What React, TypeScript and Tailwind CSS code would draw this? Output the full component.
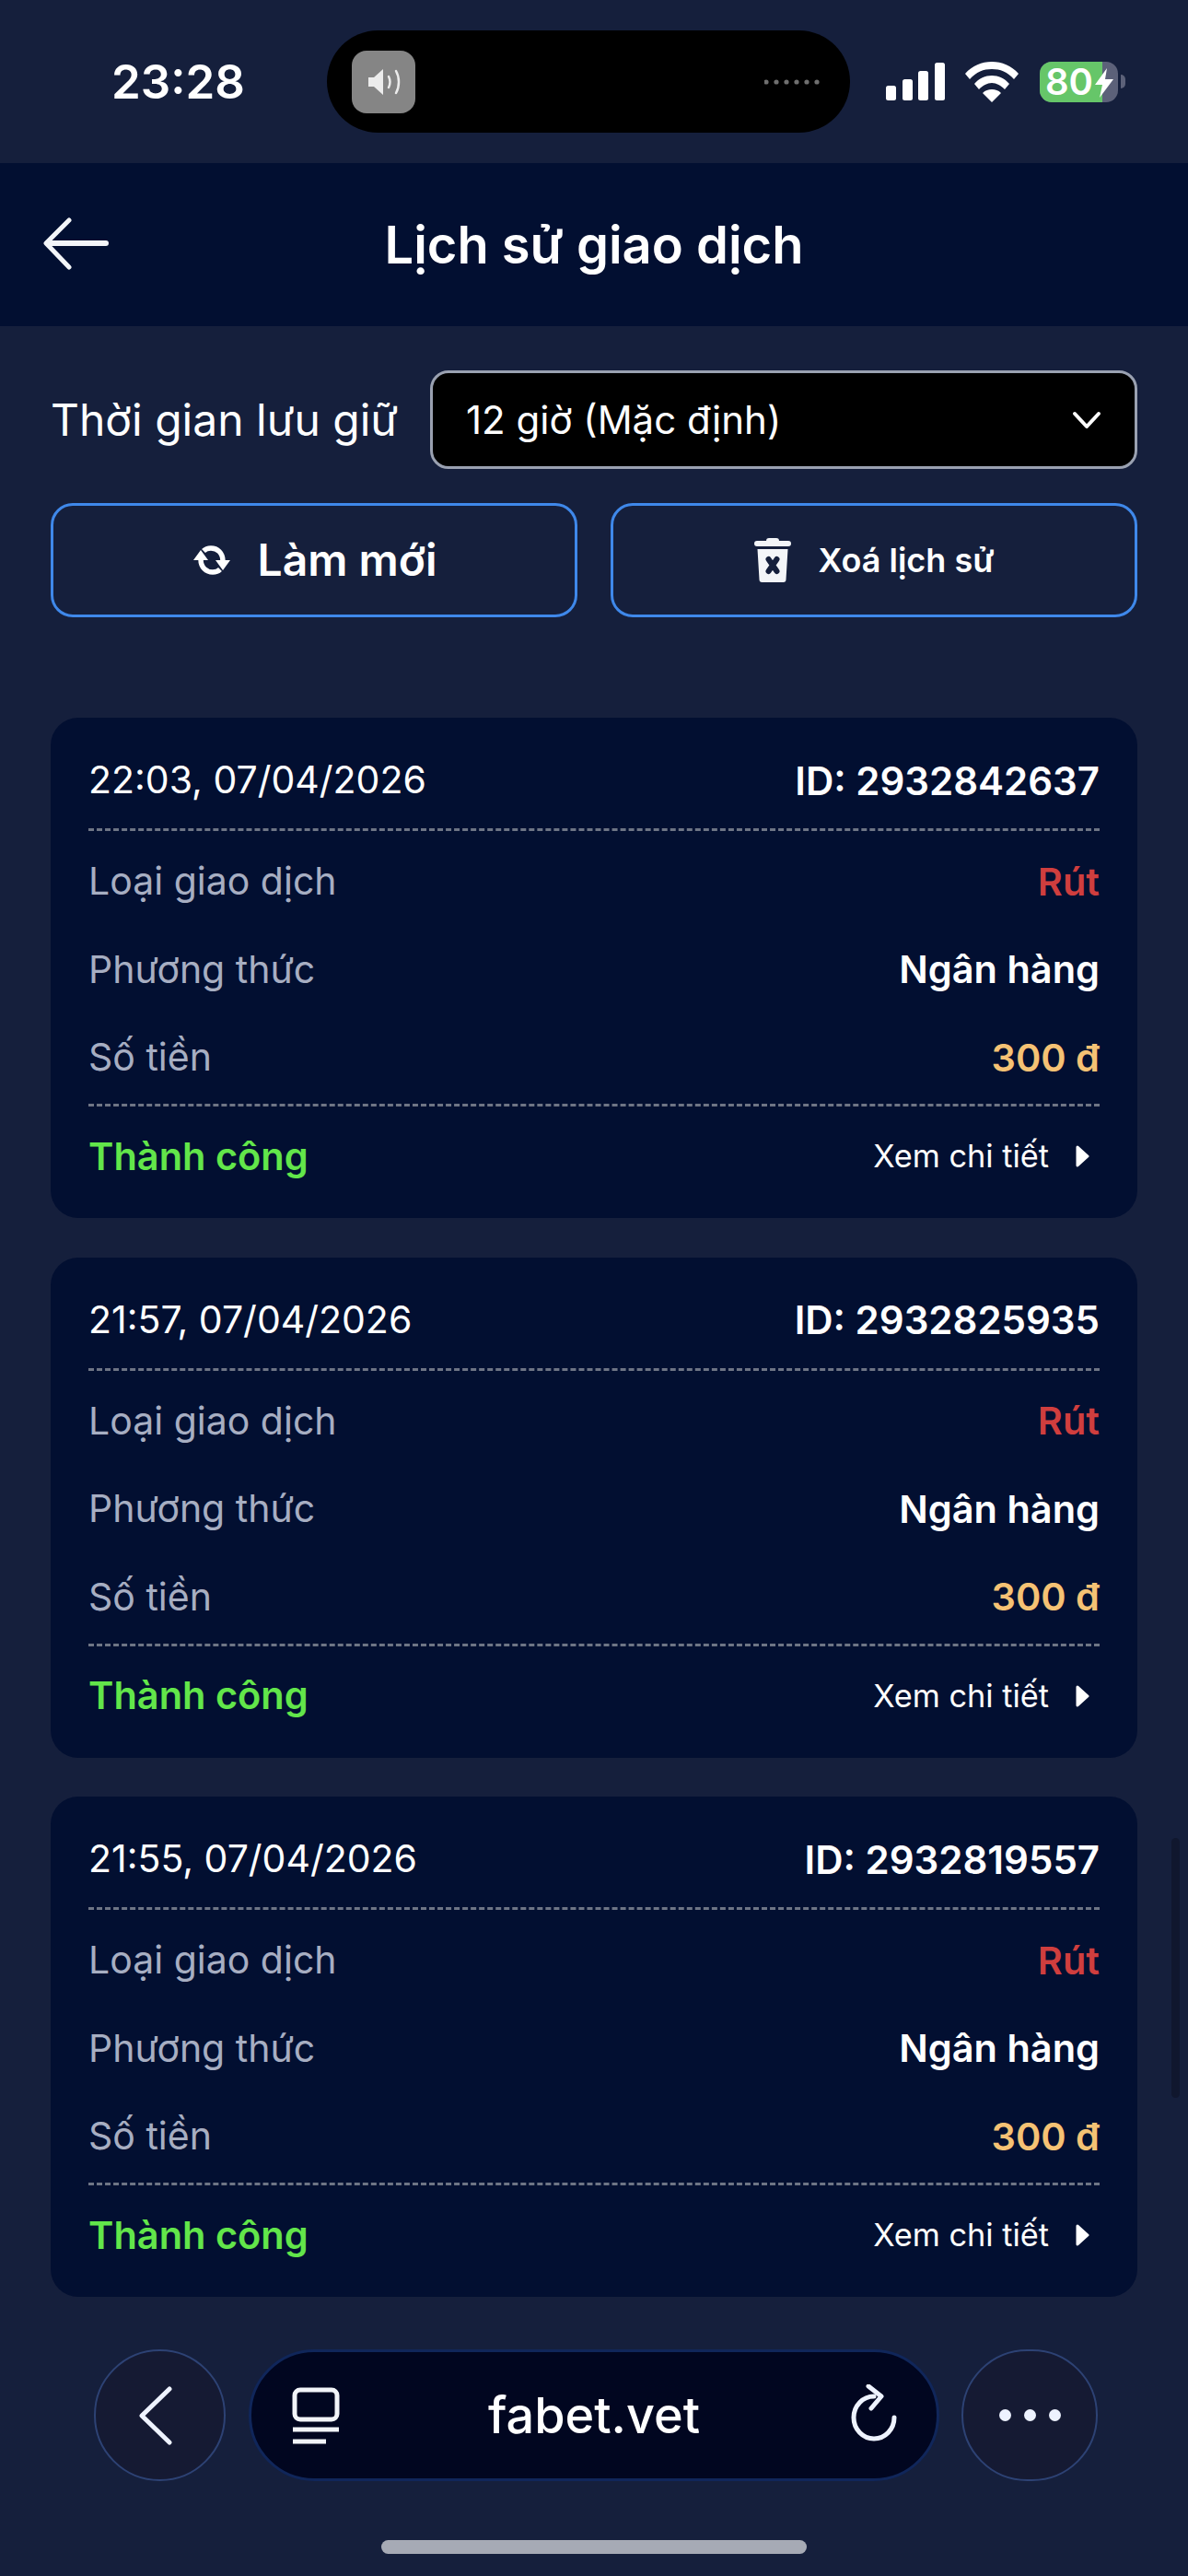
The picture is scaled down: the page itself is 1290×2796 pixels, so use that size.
const font = { fontFamily: 'Inter, "Noto Sans", sans-serif' };

const transactions = [
  { time: '22:03, 07/04/2026', id: '2932842637' },
  { time: '21:57, 07/04/2026', id: '2932825935' },
  { time: '21:55, 07/04/2026', id: '2932819557' },
];

const StatusBar = () => (
  <div className="relative flex h-[177px] shrink-0 items-center">
    <span className="ml-[121px] w-[234px] text-[51px] leading-none font-semibold text-white">23:28</span>
    <div className="flex h-[111px] w-[568px] items-center justify-between rounded-full bg-black pr-[33px] pl-[27px]">
      <div className="flex h-[68px] w-[69px] items-center justify-center rounded-[16px] bg-[#858585]">
        <svg width="36" height="30" viewBox="0 0 36 30">
          <path d="M1 10h6l10-9v28L7 20H1z" fill="#ececec" />
          <path d="M23 9c2 4 2 8 0 12M31 3c4 7 4 17 0 24" fill="none" stroke="#ececec" strokeWidth="2.5" strokeLinecap="round" />
        </svg>
      </div>
      <svg width="60" height="6" viewBox="0 0 60 6">
        {[3, 14, 25, 36, 47, 58].map((x) => (
          <circle key={x} cx={x - 1} cy="3" r="2.6" fill="#6f6f6f" />
        ))}
      </svg>
    </div>
    <div className="ml-[38px] flex items-center">
      <svg width="66" height="42" viewBox="0 0 66 42" fill="#fff">
        <rect x="1" y="25" width="11" height="16" rx="2.5" />
        <rect x="19" y="18" width="11" height="23" rx="2.5" />
        <rect x="36" y="9" width="11" height="32" rx="2.5" />
        <rect x="54" y="0" width="11" height="41" rx="2.5" />
      </svg>
      <svg className="ml-[21px]" width="58" height="44" viewBox="0 0 58 44" fill="#fff">
        <path d="M29 0C18 0 8 4 0 13l5 6C12 11 20 8 29 8s17 3 24 11l5-6C50 4 40 0 29 0z" />
        <path d="M29 15c-7 0-14 3-19 9l5 6c4-4 9-7 14-7s10 3 14 7l5-6c-5-6-12-9-19-9z" />
        <path d="M29 30c-4 0-7 1-10 4l10 10 10-10c-3-3-6-4-10-4z" />
      </svg>
      <div className="relative ml-[23px] flex h-[44px] w-[85px] rounded-[13px] bg-[#5c6179]">
        <div className="flex w-[68px] items-center rounded-l-[13px] bg-[#66c669] pl-[6px] text-[40px] leading-none font-semibold text-white">80</div>
        <svg className="absolute top-[7px] left-[60px]" width="20" height="32" viewBox="0 0 20 32">
          <path d="M13 0L0 18h8L5 32l15-20h-9z" fill="#fff" />
        </svg>
      </div>
      <div className="ml-[3px] h-[15px] w-[5px] rounded-r-full bg-[#5c6179]" />
    </div>
  </div>
);

const Header = () => (
  <div className="relative flex h-[177px] shrink-0 items-center justify-center bg-[#020f31]">
    <svg className="absolute top-[59px] left-[46px]" width="72" height="58" viewBox="0 0 72 58" fill="none" stroke="#f3f5f8" strokeLinecap="round" strokeLinejoin="round">
      <path d="M29 3L4 28l25 26" strokeWidth="5" />
      <path d="M6 28h63" strokeWidth="6" />
    </svg>
    <h1 className="text-[56px] leading-none font-semibold text-white">Lịch sử giao dịch</h1>
  </div>
);

const Row = ({ label, value, color }: { label: string; value: string; color: string }) => (
  <div className="flex h-[95.5px] items-center justify-between">
    <span className="text-[41px] text-[#a7aec2]">{label}</span>
    <span className={`text-[41.5px] font-semibold ${color}`}>{value}</span>
  </div>
);

const Card = ({ time, id }: { time: string; id: string }) => (
  <div className="flex h-[543px] flex-col rounded-[30px] bg-[#020f31] px-[41px]">
    <div className="flex h-[120px] shrink-0 items-center justify-between pt-[20px] pb-[4px] text-white">
      <span className="text-[41px]">{time}</span>
      <span className="text-[42px] font-semibold">ID: {id}</span>
    </div>
    <div className="border-t-[3px] border-dashed border-[#6e7585]" />
    <div className="flex h-[296px] shrink-0 flex-col justify-center pt-[5px]">
      <Row label="Loại giao dịch" value="Rút" color="text-[#d03e3e]" />
      <Row label="Phương thức" value="Ngân hàng" color="text-white" />
      <Row label="Số tiền" value="300 đ" color="text-[#f5c274]" />
    </div>
    <div className="border-t-[3px] border-dashed border-[#6e7585]" />
    <div className="flex flex-1 items-center justify-between pb-[13px]">
      <span className="text-[41.5px] font-semibold text-[#62e64a]">Thành công</span>
      <span className="flex items-center text-[34.3px] text-white">
        Xem chi tiết
        <svg className="mr-[11px] ml-[28px]" width="16" height="24" viewBox="0 0 16 24">
          <path d="M3 2l11 10L3 22z" fill="#fff" stroke="#fff" strokeWidth="3" strokeLinejoin="round" />
        </svg>
      </span>
    </div>
  </div>
);

const BottomBar = () => (
  <div className="flex h-[143px] shrink-0 items-stretch pl-[102px]">
    <div className="flex w-[143px] items-center justify-center rounded-full border-2 border-[#2d4274] bg-[#151a33] pr-[10px]">
      <svg width="38" height="64" viewBox="0 0 38 64" fill="none" stroke="#eef3ff" strokeWidth="5" strokeLinecap="round" strokeLinejoin="round">
        <path d="M34 3L4 32l30 29" />
      </svg>
    </div>
    <div className="relative ml-[25px] flex w-[750px] items-center justify-center rounded-full border-[3px] border-[#10265a] bg-[#010620]">
      <svg className="absolute top-[38px] left-[44px]" width="52" height="62" viewBox="0 0 52 62" fill="none" stroke="#f2f4f8" strokeWidth="5">
        <rect x="3" y="3" width="46" height="32" rx="6" />
        <path d="M1 46h50" strokeWidth="5" />
        <path d="M1 59h36" strokeWidth="5" />
      </svg>
      <span className="text-[54px] leading-none font-medium text-white">fabet.vet</span>
      <svg className="absolute top-[35px] right-[42px]" width="52" height="64" viewBox="0 0 52 64" fill="none" stroke="#eef3ff" strokeWidth="5" strokeLinecap="round" strokeLinejoin="round">
        <path d="M48 36a22 23 0 1 1-22-23" />
        <path d="M20 2l14 11-11 13" />
      </svg>
    </div>
    <div className="ml-[24px] flex w-[148px] items-center justify-center gap-[14px] rounded-full border-2 border-[#2d4274] bg-[#151a33]">
      <div className="size-[13px] rounded-full bg-[#eef3ff]" />
      <div className="size-[13px] rounded-full bg-[#eef3ff]" />
      <div className="size-[13px] rounded-full bg-[#eef3ff]" />
    </div>
  </div>
);

export default function App() {
  return (
    <div className="relative flex h-[2796px] w-[1290px] flex-col overflow-hidden bg-[#151f3c]" style={font}>
      <StatusBar />
      <Header />
      <div className="flex flex-1 flex-col px-[55px] pt-[48px]">
        <div className="flex items-center justify-between">
          <span className="text-[48px] text-white">Thời gian lưu giữ</span>
          <div className="flex h-[107px] w-[768px] items-center justify-between rounded-[20px] border-[3px] border-[#9aa1b1] bg-black pr-[36px] pl-[36px]">
            <span className="text-[42px] text-white">12 giờ (Mặc định)</span>
            <svg width="32" height="20" viewBox="0 0 32 20" fill="none" stroke="#fff" strokeWidth="4" strokeLinecap="round" strokeLinejoin="round">
              <path d="M3 3l13 14L29 3" />
            </svg>
          </div>
        </div>
        <div className="mt-[37px] grid grid-cols-2 gap-[36px]">
          <button className="flex h-[124px] items-center justify-center gap-[30px] rounded-[24px] border-[3px] border-[#3f88ea] pl-[2px]">
            <svg width="40" height="32" viewBox="0 0 40 32" fill="none" stroke="#fff" strokeWidth="5.5">
              <path d="M8 15C8 24 14 29 21 29c3 0 6-1 8-3" />
              <path d="M32 17C32 8 26 3 19 3c-3 0-6 1-8 3" />
              <path d="M8 5L0 16h16zM32 27l8-11H24z" fill="#fff" stroke="none" />
            </svg>
            <span className="text-[48px] leading-none font-semibold text-white">Làm mới</span>
          </button>
          <button className="flex h-[124px] items-center justify-center gap-[30px] rounded-[24px] border-[3px] border-[#3f88ea]">
            <svg width="40" height="48" viewBox="0 0 40 48">
              <path d="M13 3c0-2 1-3 3-3h8c2 0 3 1 3 3h10c2 0 3 1 3 3s-1 3-3 3H3C1 9 0 8 0 6s1-3 3-3z" fill="#f3f5f8" />
              <path d="M3.5 12h33l-2 33c0 2-1 3-3 3h-23c-2 0-3-1-3-3z" fill="#f3f5f8" />
              <path d="M15.5 23l9 13M24.5 23l-9 13" stroke="#151f3c" strokeWidth="6" strokeLinecap="round" />
            </svg>
            <span className="text-[36px] leading-none font-semibold text-white">Xoá lịch sử</span>
          </button>
        </div>
        <div className="mt-[109px] flex flex-col gap-[42.5px]">
          {transactions.map((t) => (
            <Card key={t.id} time={t.time} id={t.id} />
          ))}
        </div>
      </div>
      <BottomBar />
      <div className="mx-auto mt-[64px] mb-[24px] h-[15px] w-[462px] shrink-0 rounded-full bg-[#a6aab5]" />
      <div className="absolute top-[1995px] left-[1272px] h-[282px] w-[9px] rounded-full bg-[#10172e]" />
    </div>
  );
}
